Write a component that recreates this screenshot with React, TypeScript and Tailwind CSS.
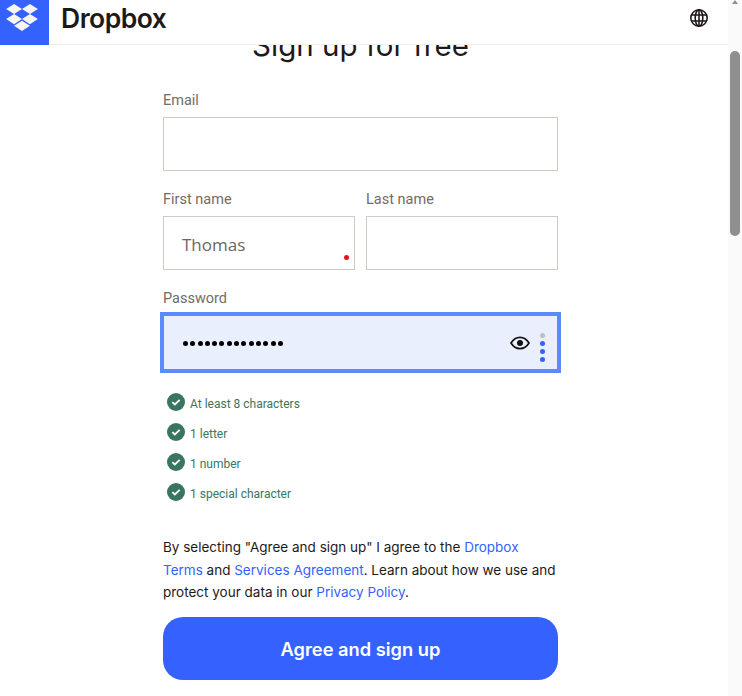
import React from 'react';

const checks = ['At least 8 characters', '1 letter', '1 number', '1 special character'];

const DropboxLogo = () => (
    <svg width="32" height="28" viewBox="0 0 34 30" fill="#f7f5f2">
        <path d="M8.500 0 17 5.400 8.500 10.800 0 5.400zM25.500 0 34 5.400l-8.500 5.400L17 5.400zM0 16.200l8.500-5.400 8.500 5.400-8.500 5.400zM25.500 10.800l8.500 5.400-8.500 5.400-8.500-5.400zM8.500 23.400l8.500-5.400 8.500 5.400-8.500 5.600z" />
    </svg>
);

const Globe = () => (
    <svg width="20" height="20" viewBox="0 0 20 20" fill="none" stroke="#1e1919" strokeWidth="1.6">
        <circle cx="10" cy="10" r="8.200" />
        <ellipse cx="10" cy="10" rx="3.800" ry="8.200" />
        <path d="M2 7h16M2 13h16M10 2v16" />
    </svg>
);

const Eye = () => (
    <svg width="20" height="14" viewBox="0 0 20 14" fill="none">
        <path d="M1 7c2.200-3.600 5.200-5.600 9-5.600s6.800 2 9 5.600c-2.200 3.600-5.200 5.600-9 5.600S3.200 10.600 1 7z" stroke="#111" strokeWidth="1.700" />
        <circle cx="10" cy="7" r="3" fill="#111" />
    </svg>
);

const CheckBadge = () => (
    <svg width="18" height="18" viewBox="0 0 18 18" className="shrink-0">
        <circle cx="9" cy="9" r="9" fill="#3a7561" />
        <path d="M5.300 9.200 7.800 11.500 12.700 6.800" fill="none" stroke="#fff" strokeWidth="1.800" />
    </svg>
);

const Label = ({ children }: { children: React.ReactNode }) => (
    <label className="block text-[14.500px] leading-[17px] text-[#736c64]">{children}</label>
);

export default function App() {
    return (
        <div className="flex h-[696px] w-[742px] overflow-hidden bg-white font-['Roboto',sans-serif]">
            <div className="flex min-w-0 flex-1 flex-col">
                <header className="relative z-10 flex h-[45px] shrink-0 items-start border-b border-[#f1efec] bg-white">
                    <div className="h-[45px] w-[49px] bg-[#3562ff] pl-[6px] pt-[4px]">
                        <DropboxLogo />
                    </div>
                    <span className="ml-3 font-['Inter',sans-serif] text-[26.500px] font-semibold leading-[36px] tracking-[-0.5px] text-[#1e1919]">Dropbox</span>
                    <div className="ml-auto mr-[19px] flex pt-[8px]">
                        <Globe />
                    </div>
                </header>

                <main className="flex-1 overflow-hidden">
                    <div className="ml-[163px] w-[395px]">
                        <h1 className="-mt-[20px] mb-[27px] h-[40px] text-center font-['Inter',sans-serif] text-[29.500px] font-normal leading-[40px] text-[#1e1919]">Sign up for free</h1>

                        <Label>Email</Label>
                        <div className="mt-[8px] h-[54px] border border-[#cfccc6]" />

                        <div className="mt-[20px] flex gap-[11px]">
                            <div className="flex-1">
                                <Label>First name</Label>
                                <div className="relative mt-[8px] flex h-[54px] items-center border border-[#cfccc6] pl-[18px] pt-[3px] font-['Open_Sans',sans-serif] text-[17px] text-[#6b6660]">
                                    Thomas
                                    <span className="absolute bottom-[9px] right-[5px] h-[5px] w-[5px] rounded-full bg-[#e8101a]" />
                                </div>
                            </div>
                            <div className="flex-1">
                                <Label>Last name</Label>
                                <div className="mt-[8px] h-[54px] border border-[#cfccc6]" />
                            </div>
                        </div>

                        <div className="mt-[20px]">
                            <Label>Password</Label>
                            <div className="-mx-[3px] mt-[5px] flex h-[61px] w-[401px] items-center border-[4px] border-[#5b8bfb] bg-[#e9effd] pl-[19px] pr-[12px] pt-[1px]">
                                <div className="flex gap-[2.300px]">
                                    {Array.from({ length: 14 }, (_, i) => (
                                        <span key={i} className="h-[5px] w-[5px] rounded-full bg-black" />
                                    ))}
                                </div>
                                <div className="ml-auto flex items-center gap-[10px]">
                                    <Eye />
                                    <div className="mt-[9px] flex flex-col gap-[3px]">
                                        <span className="h-[5px] w-[5px] rounded-full bg-[#c3bfb9]" />
                                        <span className="h-[5px] w-[5px] rounded-full bg-[#3562ff]" />
                                        <span className="h-[5px] w-[5px] rounded-full bg-[#3562ff]" />
                                        <span className="h-[5px] w-[5px] rounded-full bg-[#3562ff]" />
                                    </div>
                                </div>
                            </div>
                        </div>

                        <ul className="ml-[4px] mt-[20px] flex flex-col gap-[12px]">
                            {checks.map(c => (
                                <li key={c} className="flex h-[18px] items-center gap-[5px] text-[12px] text-[#3a7561]">
                                    <CheckBadge />
                                    <span className="mt-[3px]">{c}</span>
                                </li>
                            ))}
                        </ul>

                        <p className="mt-[35px] font-['Inter',sans-serif] text-[13.500px] leading-[22.500px] text-[#1e1919]">
                            By selecting "Agree and sign up" I agree to the <a className="text-[#3562ff]">Dropbox Terms</a> and <a className="text-[#3562ff]">Services Agreement</a>. Learn about how we use and protect your data in our <a className="text-[#3562ff]">Privacy Policy</a>.
                        </p>

                        <button className="mt-[13px] h-[63px] w-full rounded-[20px] bg-[#3562ff] pt-[3px] font-['Inter',sans-serif] text-[18.300px] font-semibold text-white">Agree and sign up</button>
                    </div>
                </main>
            </div>

            <div className="flex w-[14px] shrink-0 flex-col items-center bg-[#fafafa]">
                <svg width="10" height="4" viewBox="0 0 10 4" className="shrink-0"><path d="M2 4 5 0l3 4z" fill="#8f8f8f" /></svg>
                <div className="mt-[47px] h-[185px] w-[10px] rounded-full bg-[#8f8f8f]" />
            </div>
        </div>
    );
}
